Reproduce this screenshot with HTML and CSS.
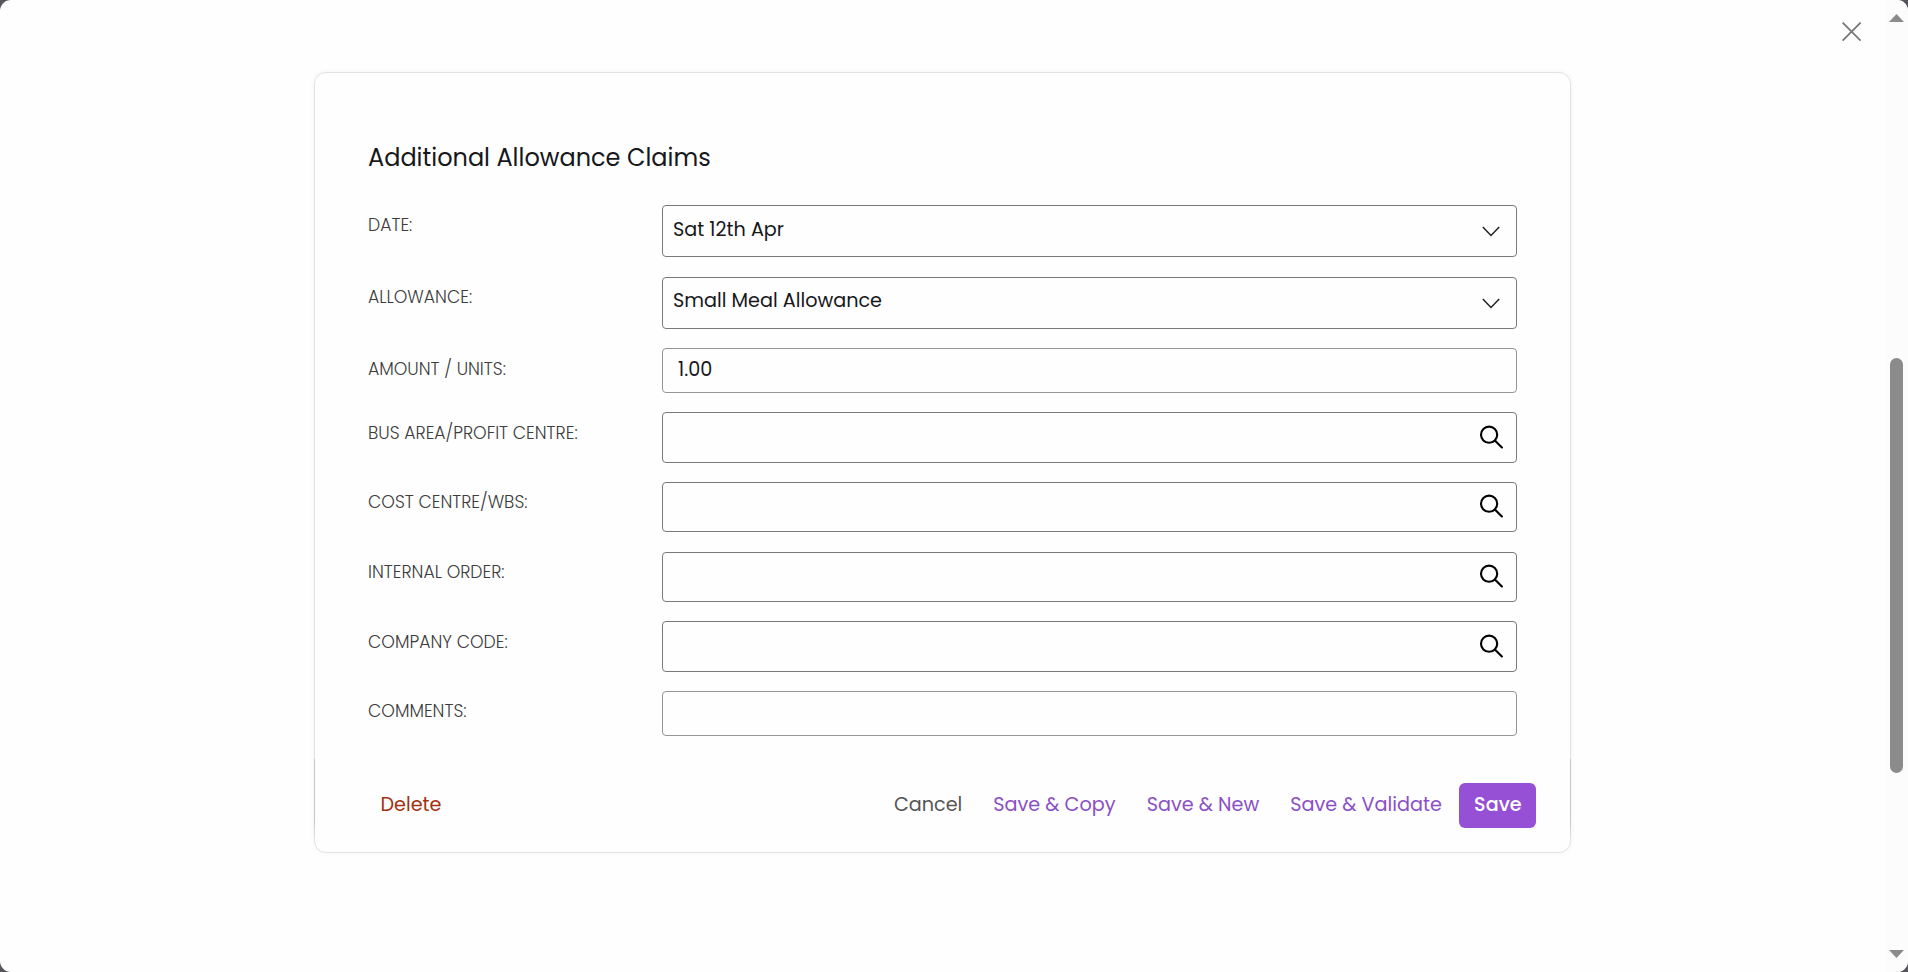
FILE: index.html
```html
<!DOCTYPE html>
<html lang="en">
<head>
<meta charset="utf-8">
<title>Additional Allowance Claims</title>
<link rel="stylesheet" href="styles.css">
</head>
<body>
<div class="dialog">
  <main class="content">
    <section class="card">
      <h1 class="title">Additional Allowance Claims</h1>
      <div class="rows">
        <div class="row"><label class="label">DATE:</label><div class="field select"><span class="value">Sat 12th Apr</span><svg class="chevron" viewBox="0 0 18 11"><path d="M.8 1 9 9.5 17.2 1"/></svg></div></div>
        <div class="row"><label class="label">ALLOWANCE:</label><div class="field select second"><span class="value">Small Meal Allowance</span><svg class="chevron" viewBox="0 0 18 11"><path d="M.8 1 9 9.5 17.2 1"/></svg></div></div>
        <div class="row amount"><label class="label low">AMOUNT / UNITS:</label><div class="field input"><span class="value">1.00</span></div></div>
        <div class="row"><label class="label low">BUS AREA/PROFIT CENTRE:</label><div class="field lookup tall"><svg class="search" viewBox="0 0 24 24"><circle cx="10.1" cy="9.7" r="8.1"/><path d="m15.9 15.5 7 7"/></svg></div></div>
        <div class="row cost"><label class="label">COST CENTRE/WBS:</label><div class="field lookup"><svg class="search" viewBox="0 0 24 24"><circle cx="10.1" cy="9.7" r="8.1"/><path d="m15.9 15.5 7 7"/></svg></div></div>
        <div class="row internal"><label class="label">INTERNAL ORDER:</label><div class="field lookup"><svg class="search" viewBox="0 0 24 24"><circle cx="10.1" cy="9.7" r="8.1"/><path d="m15.9 15.5 7 7"/></svg></div></div>
        <div class="row"><label class="label low">COMPANY CODE:</label><div class="field lookup tall"><svg class="search" viewBox="0 0 24 24"><circle cx="10.1" cy="9.7" r="8.1"/><path d="m15.9 15.5 7 7"/></svg></div></div>
        <div class="row comments"><label class="label">COMMENTS:</label><div class="field input"></div></div>
      </div>
      <footer class="actions">
        <span class="action delete">Delete</span>
        <span class="action cancel">Cancel</span>
        <span class="action copy">Save &amp; Copy</span>
        <span class="action new">Save &amp; New</span>
        <span class="action validate">Save &amp; Validate</span>
        <button class="save">Save</button>
      </footer>
    </section>
    <svg class="close" viewBox="0 0 20 20"><path d="m.6.6 18 18M18.6.6l-18 18"/></svg>
  </main>
  <aside class="scrollbar">
    <svg class="arrow" viewBox="0 0 15 8"><path d="M7.5 0 15 8H0z"/></svg>
    <div class="thumb"></div>
    <svg class="arrow" viewBox="0 0 15 8"><path d="M0 0h15L7.5 8z"/></svg>
  </aside>
</div>
</body>
</html>
```
FILE: styles.css
```css
* { box-sizing: border-box; }
body {
  margin: 0;
  height: 972px;
  overflow: hidden;
  background: #55555b;
  font-family: Poppins, Inter, "Open Sans", sans-serif;
  color: #16181b;
}
.dialog {
  display: flex;
  height: 972px;
  border-radius: 11px;
  overflow: hidden;
  background: #fefefe;
}
.content { position: relative; width: 1885px; padding: 72px 0 0 314px; }
.card {
  width: 1257px;
  height: 781px;
  border: 1px solid #e1e2e2;
  border-radius: 12px;
  box-shadow: 0 0 5px rgba(0, 0, 0, .05);
  padding: 66px 0 0 53px;
}
.title { margin: 0; font-size: 24px; font-weight: 400; line-height: 38px; white-space: nowrap; }
.rows { display: flex; flex-direction: column; gap: 20px; padding-top: 28px; }
.row { display: flex; align-items: flex-start; }
.row.amount { margin: -1px 0; }
.row.cost, .row.comments { margin-top: -1px; }
.row.internal { margin-bottom: -1px; }
.label {
  width: 294px;
  padding-top: 8px;
  font-size: 17.25px;
  font-weight: 300;
  line-height: 24px;
  color: #3c3c3c;
  white-space: nowrap;
}
.label.low { padding-top: 9px; }
.field {
  display: flex;
  justify-content: space-between;
  width: 855px;
  height: 50px;
  border: 1px solid #777a7d;
  border-radius: 4px;
}
.select { height: 52px; padding: 9px 16px 0 10px; }
.select.second { padding-top: 8px; }
.input { height: 45px; border-color: #929699; padding: 6px 14px 0 15px; }
.lookup { justify-content: flex-end; padding: 11px 13px 0 0; }
.tall { height: 51px; padding-top: 12px; }
.value { font-size: 19.2px; line-height: 30px; white-space: nowrap; }
.chevron { width: 18px; height: 11px; margin-top: 11px; fill: none; stroke: #222; stroke-width: 1.5; }
.second .chevron { margin-top: 12px; }
.search { width: 24px; height: 24px; fill: none; stroke: #000; stroke-width: 2.1; stroke-linecap: round; }
.actions {
  display: flex;
  position: relative;
  width: 1257px;
  height: 93px;
  margin: 23px 0 0 -54px;
  padding: 24px 0 0 66.5px;
}
.actions::before, .actions::after {
  content: "";
  position: absolute;
  top: 0;
  left: 0;
  width: 1px;
  height: 80px;
  background: linear-gradient(#c4c6c8 75%, #e1e2e2);
}
.actions::after { left: auto; right: 0; }
.action { font-size: 19.2px; line-height: 43px; white-space: nowrap; color: #8b50c5; }
.delete { width: 513.5px; color: #a13212; }
.cancel { width: 99.3px; color: #555; }
.copy { width: 153.5px; }
.new { width: 143.5px; }
.validate { width: 169px; }
.save {
  width: 77px;
  height: 45px;
  border: 0;
  border-radius: 6px;
  padding: 0 0 2px;
  background: #9650d5;
  color: #fff;
  font: 500 19.2px Poppins, Inter, "Open Sans", sans-serif;
}
.close { position: absolute; top: 22px; right: 23px; width: 20px; height: 20px; fill: none; stroke: #777; stroke-width: 1.8; }
.scrollbar { display: flex; flex-direction: column; width: 23px; padding: 14px 0 0 4px; background: #fcfcfc; }
.thumb { width: 13px; height: 415px; margin: 336px 0 177px 1px; border-radius: 7px; background: #8b8b8b; }
.arrow { width: 15px; height: 8px; fill: #8b8b8b; }
```
